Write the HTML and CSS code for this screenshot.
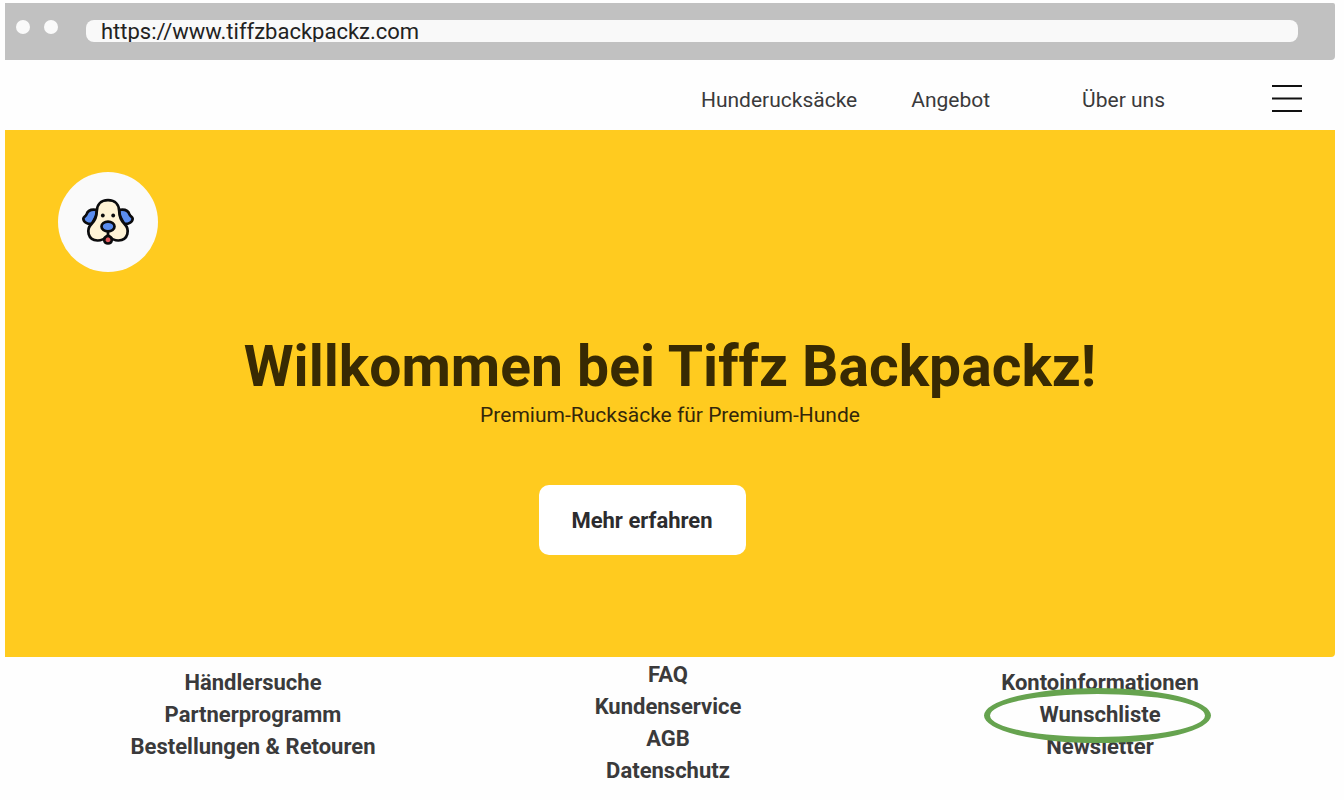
FILE: index.html
```html
<!DOCTYPE html>
<html lang="de">
<head>
<meta charset="utf-8">
<title>Tiffz Backpackz</title>
<link rel="stylesheet" href="styles.css">
</head>
<body>
<div class="browser-bar">
  <span class="dot"></span>
  <span class="dot"></span>
  <input class="address" type="text" aria-label="Adresse" value="https://www.tiffzbackpackz.com">
</div>
<header class="site-header">
  <nav class="nav">
    <a class="nav-link" href="#">Hunderucksäcke</a>
    <a class="nav-link nav-offer" href="#">Angebot</a>
    <a class="nav-link nav-about" href="#">Über uns</a>
  </nav>
  <button class="menu" type="button" aria-label="Menü">
    <svg width="32" height="28" viewBox="0 0 32 28" fill="none" stroke="#111" stroke-width="2"><path d="M1 2h30M1 14.500h30M1 27h30"/></svg>
  </button>
</header>
<main class="hero">
  <a class="logo" href="#" aria-label="Startseite">
    <svg width="54" height="48" viewBox="0 0 54 48" stroke="#0b0b0d" stroke-width="2.700" stroke-linejoin="round" stroke-linecap="round">
      <path fill="#5b8def" d="M16 12C10 11 6.500 13 5.500 16.500C4.500 18.500 2.500 19 2.300 20.800C2.500 24.500 7 26.300 11 25.800L15 18Z"/>
      <path fill="#5b8def" d="M38 12C44 11 47.500 13 48.500 16.500C49.500 18.500 51.500 19 51.700 20.800C51.500 24.500 47 26.300 43 25.800L39 18Z"/>
      <path fill="#fff3d6" d="M27 2.200C19.500 2.200 16 7 15.800 13C15.800 18 14.500 22 10.500 26C5 31.500 6.500 42 16.500 42.500C21 42.700 24 40.500 27 38C30 40.500 33 42.700 37.500 42.500C47.500 42 49 31.500 43.500 26C39.500 22 38.200 18 38.200 13C38 7 34.500 2.200 27 2.200Z"/>
      <path fill="#e4575d" d="M27 37.500C24.500 38.500 23 40 23.300 42.500C24 46.500 30 46.500 30.700 42.500C31 40 29.500 38.500 27 37.500Z"/>
      <path fill="none" d="M27 34V37.500"/>
      <ellipse fill="#5b8def" cx="27" cy="28.500" rx="6.500" ry="4.900"/>
      <g fill="#0b0b0d" stroke="none"><circle cx="21.800" cy="17.500" r="1.900"/><circle cx="32.200" cy="17.500" r="1.900"/></g>
    </svg>
  </a>
  <h1 class="title">Willkommen bei Tiffz Backpackz!</h1>
  <p class="subtitle">Premium-Rucksäcke für Premium-Hunde</p>
  <button class="cta" type="button">Mehr erfahren</button>
</main>
<footer class="footer">
  <ul class="links">
    <li><a href="#">Händlersuche</a></li>
    <li><a href="#">Partnerprogramm</a></li>
    <li><a href="#">Bestellungen &amp; Retouren</a></li>
  </ul>
  <ul class="links links-center">
    <li><a href="#">FAQ</a></li>
    <li><a href="#">Kundenservice</a></li>
    <li><a href="#">AGB</a></li>
    <li><a href="#">Datenschutz</a></li>
  </ul>
  <ul class="links">
    <li><a href="#">Kontoinformationen</a></li>
    <li><a class="highlight" href="#">Wunschliste</a></li>
    <li><a href="#">Newsletter</a></li>
  </ul>
</footer>
</body>
</html>
```
FILE: styles.css
```css
*, *::before { box-sizing: border-box; }
body {
  margin: 0;
  padding: 3px 9px 0 5px;
  background: #fefefe;
  color: #3a3a3b;
  font-family: Roboto, "Liberation Sans", sans-serif;
  font-size: 22px;
  line-height: 32px;
}
a { color: inherit; text-decoration: none; }
button, input { font: inherit; color: inherit; border: 0; }
.browser-bar {
  display: flex;
  align-items: flex-start;
  gap: 14px;
  height: 57px;
  padding: 17px 37px 0 11px;
  background: #c1c1c1;
  border-radius: 0 2px 4px 0;
}
.dot {
  width: 14px;
  height: 14px;
  border-radius: 50%;
  background: #fafafa;
}
.address {
  flex: 1;
  min-width: 0;
  height: 22px;
  margin-left: 14px;
  padding: 0 15px;
  border-radius: 8px;
  background: #f9f9f9;
  color: #222;
  line-height: 22px;
}
.site-header {
  display: flex;
  justify-content: flex-end;
  align-items: center;
  height: 70px;
  padding: 6px 32px 0 0;
}
.nav { display: flex; padding-top: 4px; font-size: 21px; line-height: 28px; }
.nav-offer { margin-left: 54px; }
.nav-about { margin-left: 92px; }
.menu {
  margin-left: 106px;
  padding: 0;
  background: none;
  line-height: 0;
}
.hero {
  display: flex;
  flex-direction: column;
  align-items: center;
  padding: 42px 53px 102px;
  background: #ffcb1f;
  border-radius: 0 0 4px 0;
}
.logo {
  align-self: flex-start;
  display: grid;
  place-items: center;
  width: 100px;
  height: 100px;
  border-radius: 50%;
  background: #fafafa;
}
.title {
  margin: 63px 0 0;
  color: #382a03;
  font-size: 57px;
  font-weight: 700;
  line-height: 64px;
}
.subtitle {
  margin: 0;
  color: #33270a;
  font-size: 21px;
}
.cta {
  width: 207px;
  height: 70px;
  margin: 54px 56px 0 0;
  padding-top: 3px;
  border-radius: 10px;
  background: #fff;
  color: #2c2c2e;
  font-weight: 700;
}
.footer {
  display: grid;
  grid-template-columns: 420fr 410fr 454fr;
  padding: 2px 8px 0 38px;
  font-weight: 700;
  text-align: center;
}
.links { margin: 8px 0 0; padding: 0; list-style: none; }
.links-center { margin-top: 0; }
.highlight {
  position: relative;
  z-index: 0;
  display: inline-block;
}
.highlight::before {
  content: "";
  position: absolute;
  z-index: -1;
  top: -11px;
  left: 50%;
  width: 227px;
  height: 55px;
  margin-left: -116px;
  border: 6px solid #66a34f;
  border-radius: 50%;
  background: #fefefe;
}
```
